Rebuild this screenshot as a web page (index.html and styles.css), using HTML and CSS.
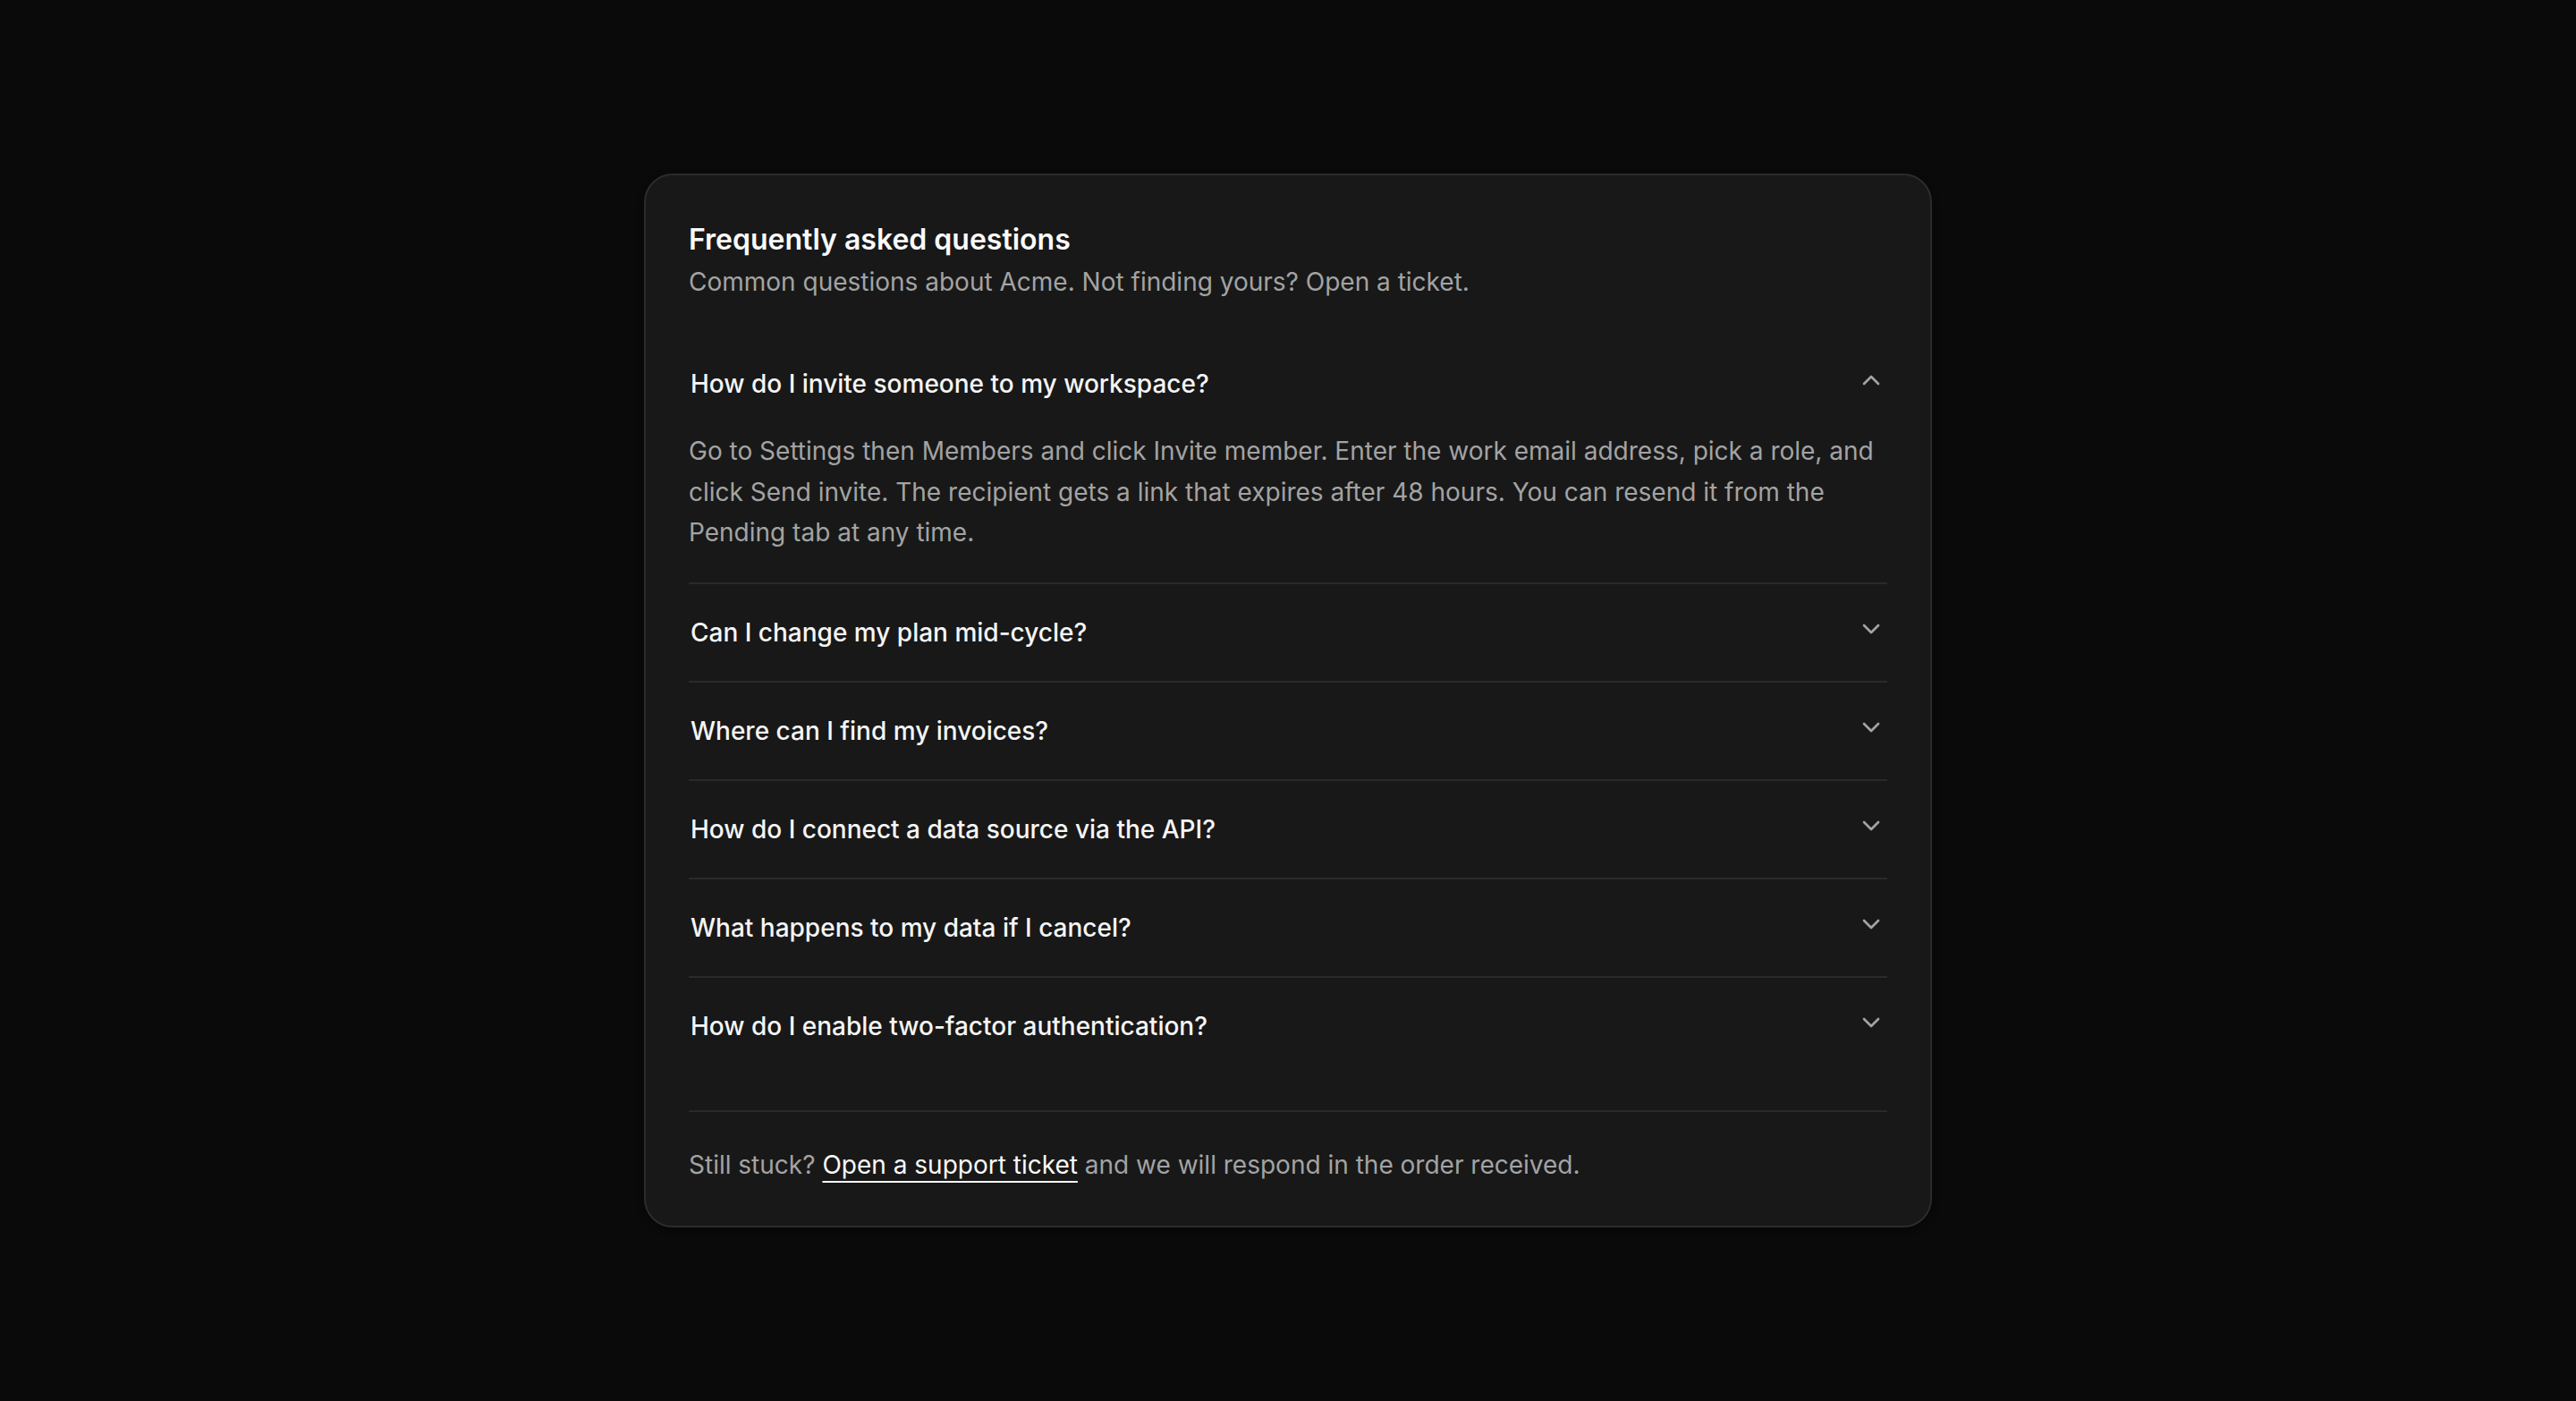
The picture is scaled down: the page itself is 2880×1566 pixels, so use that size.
FILE: index.html
```html
<!DOCTYPE html>
<html lang="en">
<head>
<meta charset="utf-8">
<title>FAQ</title>
<link rel="stylesheet" href="styles.css">
</head>
<body>
<main class="page">
  <section class="faq-card">
    <header class="faq-header">
      <h2 class="faq-title">Frequently asked questions</h2>
      <p class="faq-subtitle">Common questions about Acme. Not finding yours? Open a ticket.</p>
    </header>

    <div class="faq-list">
      <div class="faq-item is-open">
        <button class="faq-trigger" type="button" aria-expanded="true">
          <span class="faq-question">How do I invite someone to my workspace?</span>
          <svg class="faq-chevron" viewBox="0 0 24 24" aria-hidden="true"><path d="m18 15-6-6-6 6"/></svg>
        </button>
        <div class="faq-answer">
          <p>Go to Settings then Members and click Invite member. Enter the work email address, pick a role, and click Send invite. The recipient gets a link that expires after 48 hours. You can resend it from the Pending tab at any time.</p>
        </div>
      </div>

      <div class="faq-item">
        <button class="faq-trigger" type="button" aria-expanded="false">
          <span class="faq-question">Can I change my plan mid-cycle?</span>
          <svg class="faq-chevron" viewBox="0 0 24 24" aria-hidden="true"><path d="m6 9 6 6 6-6"/></svg>
        </button>
      </div>

      <div class="faq-item">
        <button class="faq-trigger" type="button" aria-expanded="false">
          <span class="faq-question">Where can I find my invoices?</span>
          <svg class="faq-chevron" viewBox="0 0 24 24" aria-hidden="true"><path d="m6 9 6 6 6-6"/></svg>
        </button>
      </div>

      <div class="faq-item">
        <button class="faq-trigger" type="button" aria-expanded="false">
          <span class="faq-question">How do I connect a data source via the API?</span>
          <svg class="faq-chevron" viewBox="0 0 24 24" aria-hidden="true"><path d="m6 9 6 6 6-6"/></svg>
        </button>
      </div>

      <div class="faq-item">
        <button class="faq-trigger" type="button" aria-expanded="false">
          <span class="faq-question">What happens to my data if I cancel?</span>
          <svg class="faq-chevron" viewBox="0 0 24 24" aria-hidden="true"><path d="m6 9 6 6 6-6"/></svg>
        </button>
      </div>

      <div class="faq-item">
        <button class="faq-trigger" type="button" aria-expanded="false">
          <span class="faq-question">How do I enable two-factor authentication?</span>
          <svg class="faq-chevron" viewBox="0 0 24 24" aria-hidden="true"><path d="m6 9 6 6 6-6"/></svg>
        </button>
      </div>
    </div>

    <footer class="faq-footer">
      Still stuck? <a class="faq-link" href="#">Open a support ticket</a> and we will respond in the order received.
    </footer>
  </section>
</main>
</body>
</html>
```

FILE: styles.css
```css
* {
  box-sizing: border-box;
}

html,
body {
  margin: 0;
  padding: 0;
}

body {
  background: #0a0a0a;
  color: #fafafa;
  font-family: Inter, "Noto Sans", "Liberation Sans", sans-serif;
  -webkit-font-smoothing: antialiased;
}

.page {
  min-height: 100vh;
  display: flex;
  align-items: center;
  justify-content: center;
}

.faq-card {
  width: 1440px;
  background: #181818;
  border: 2px solid #2c2c2c;
  border-radius: 32px;
  padding: 48px;
  box-shadow: 0 3px 8px rgba(0, 0, 0, 0.45);
}

.faq-header {
  margin-bottom: 40px;
}

.faq-title {
  margin: 0;
  font-size: 32px;
  line-height: 48px;
  font-weight: 600;
  color: #fafafa;
}

.faq-subtitle {
  margin: 3px 0 0;
  font-size: 28px;
  line-height: 40px;
  color: #a3a3a3;
}

.faq-list {
  display: flex;
  flex-direction: column;
}

.faq-item {
  border-bottom: 2px solid #2a2a2a;
}

.faq-item:last-child {
  border-bottom: 0;
}

.faq-trigger {
  width: 100%;
  display: flex;
  align-items: flex-start;
  justify-content: space-between;
  gap: 32px;
  padding: 34px 2px;
  margin: 0;
  border: 0;
  background: none;
  color: #f5f5f5;
  font-family: inherit;
  font-size: 28px;
  line-height: 40px;
  font-weight: 500;
  text-align: left;
  cursor: pointer;
}

.faq-chevron {
  width: 32px;
  height: 32px;
  flex-shrink: 0;
  fill: none;
  stroke: #a3a3a3;
  stroke-width: 2;
  stroke-linecap: round;
  stroke-linejoin: round;
}

.faq-answer {
  margin-top: -1px;
  padding: 0 0 32px;
}

.faq-answer p {
  margin: 0;
  font-size: 28px;
  line-height: 45.5px;
  color: #a3a3a3;
}

.faq-footer {
  margin-top: 40px;
  padding-top: 39px;
  border-top: 2px solid #2a2a2a;
  font-size: 28px;
  line-height: 40px;
  color: #a3a3a3;
}

.faq-link {
  color: #fafafa;
  text-decoration: underline;
  text-decoration-thickness: 2px;
  text-underline-offset: 8px;
}
```
